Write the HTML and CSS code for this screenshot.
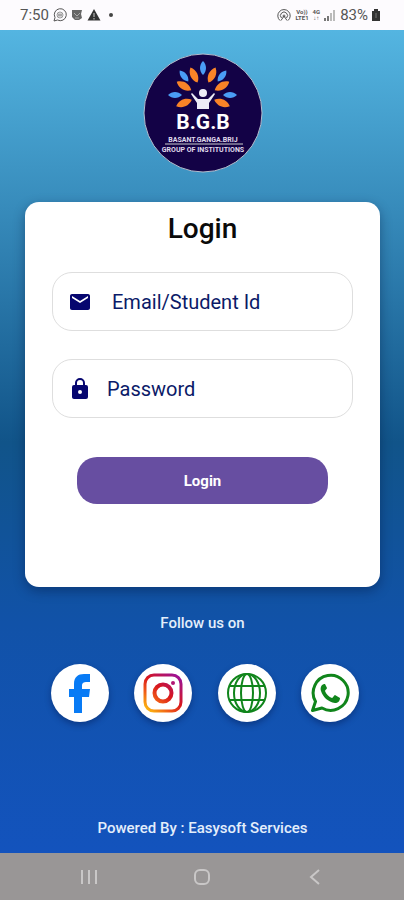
FILE: index.html
```html
<!DOCTYPE html>
<html lang="en">

<head>
    <meta charset="UTF-8">
    <meta name="viewport" content="width=device-width, initial-scale=1.0">
    <title>Login</title>
    <link rel="stylesheet" href="styles.css">
</head>

<body>
    <!-- STATUS BAR -->
    <header class="statusBar">
        <div class="statusLeft">
            <span class="time">7:50</span>
            <svg width="14" height="14" viewBox="0 0 14 14" fill="none" stroke="#555">
                <path d="M1 13l1-3.500A6 6 0 1 1 4.500 12z" />
                <circle cx="7" cy="7" r="3" stroke="#999" />
                <path d="M6 5.500v3M8 5.500v3" />
            </svg>
            <svg width="12" height="12" viewBox="0 0 12 12">
                <path d="M1 1h10l-1 4 1 4-3 2H4L1 8z" fill="#666" />
                <path d="M3 4l3 3 3-3M4 9h4" stroke="#aaa" fill="none" />
            </svg>
            <svg width="14" height="12" viewBox="0 0 14 12">
                <path d="M7 0l6.500 11.500H.5z" fill="#333" />
                <path d="M7 4v4M7 9v1.500" stroke="#ccc" />
            </svg>
            <span class="dot"></span>
        </div>
        <div class="statusRight">
            <svg width="14" height="12" viewBox="0 0 14 12" fill="none" stroke="#555">
                <path d="M3 11.500a6.200 6.200 0 1 1 8 0M4.500 9a3.500 3.500 0 1 1 5 0" />
                <circle cx="7" cy="7" r="1" />
                <path d="M7 7l-3 4.500M7 7l3 4.500" />
            </svg>
            <span class="network">Vo))<br>LTE1</span>
            <span class="network">4G<br>↓↑</span>
            <svg width="12" height="12" viewBox="0 0 12 12">
                <path d="M0 9h2v3H0zM3 7h2v5H3z" fill="#777" />
                <path d="M6 4h2v8H6zM9 1h2v11H9z" fill="#bbb" />
            </svg>
            <span class="battery">83%</span>
            <svg width="8" height="12" viewBox="0 0 8 12">
                <path d="M2 0h4v2h2v10H0V2h2z" fill="#333" />
                <path d="M4 4v5" stroke="#777" />
            </svg>
        </div>
    </header>

    <main class="mainContent">
        <svg class="logo" viewBox="0 0 120 120" role="img" aria-label="B.G.B">
            <defs>
                <path id="leaf" d="M0 -7C4 -3 4 3 0 7C-4 3 -4 -3 0 -7z" />
            </defs>
            <circle cx="60" cy="60" r="59" fill="#130246" stroke="#b5bfce" />
            <g fill="#4a9df5">
                <use href="#leaf" transform="translate(60 15)" />
                <use href="#leaf" transform="translate(41 23) rotate(-38)" />
                <use href="#leaf" transform="translate(79 23) rotate(38)" />
                <use href="#leaf" transform="translate(32 42) rotate(-90)" />
                <use href="#leaf" transform="translate(87 42) rotate(90)" />
            </g>
            <g fill="#f98427">
                <use href="#leaf" transform="translate(51 22) rotate(-25) scale(1.200)" />
                <use href="#leaf" transform="translate(69 22) rotate(25) scale(1.200)" />
                <use href="#leaf" transform="translate(41 33) rotate(-60) scale(1.200)" />
                <use href="#leaf" transform="translate(79 33) rotate(60) scale(1.200)" />
                <use href="#leaf" transform="translate(41 50) rotate(-112) scale(1.200)" />
                <use href="#leaf" transform="translate(79 50) rotate(112) scale(1.200)" />
            </g>
            <g fill="#ececf6">
                <circle cx="60" cy="40" r="4" />
                <path d="M49 40l6 6h10l6-6 1 1-6 9v6H54v-6l-6-9z" />
            </g>
            <text x="60" y="76" class="logoName">B.G.B</text>
            <text x="60" y="89" class="logoText">BASANT.GANGA.BRIJ</text>
            <path d="M22 91h78" stroke="#ccc" />
            <text x="60" y="99" class="logoText">GROUP OF INSTITUTIONS</text>
        </svg>

        <form class="card">
            <h1>Login</h1>
            <div class="field">
                <label for="email">
                    <svg width="24" height="24" viewBox="0 0 24 24" fill="#06066f" role="img" aria-label="Email">
                        <path d="M20 4H4c-1.100 0-2 .9-2 2v12c0 1.100.9 2 2 2h16c1.100 0 2-.9 2-2V6c0-1.100-.9-2-2-2zm0 4l-8 5-8-5V6l8 5 8-5v2z" />
                    </svg>
                </label>
                <input type="text" id="email" placeholder="Email/Student Id">
            </div>
            <div class="field password">
                <label for="password">
                    <svg width="24" height="24" viewBox="0 0 24 24" fill="#06066f" role="img" aria-label="Password">
                        <path d="M18 8h-1V6A5 5 0 0 0 7 6v2H6a2 2 0 0 0-2 2v10c0 1.100.9 2 2 2h12a2 2 0 0 0 2-2V10a2 2 0 0 0-2-2zm-6 9a2 2 0 1 1 0-4 2 2 0 0 1 0 4zm3-9H9V6a3 3 0 0 1 6 0v2z" />
                    </svg>
                </label>
                <input type="password" id="password" placeholder="Password">
            </div>
            <button type="button" class="loginButton">Login</button>
        </form>

        <p class="follow">Follow us on</p>
        <div class="social">
            <a href="#" aria-label="Facebook">
                <svg width="40" height="42" viewBox="0 0 40 42">
                    <path d="M14 41V25H9v-8h5v-5c0-7 4-10 10-10h6v8h-4c-2 0-4 1-4 3v4h8l-1 8h-7v16z" fill="#087bf5" />
                </svg>
            </a>
            <a href="#" aria-label="Instagram">
                <svg width="40" height="40" viewBox="0 0 40 40" fill="none" stroke="url(#insta)" stroke-width="3">
                    <defs>
                        <linearGradient id="insta" gradientUnits="userSpaceOnUse" x1="4" y1="38" x2="34" y2="2">
                            <stop offset="0" stop-color="#fdbd10" />
                            <stop offset=".3" stop-color="#f05a18" />
                            <stop offset=".55" stop-color="#d8161c" />
                            <stop offset="1" stop-color="#9c1296" />
                        </linearGradient>
                    </defs>
                    <rect x="2" y="2" width="36" height="36" rx="9" />
                    <circle cx="20" cy="20" r="8.500" stroke-width="4" />
                    <circle cx="30" cy="10" r="2" fill="#b01672" stroke="none" />
                </svg>
            </a>
            <a href="#" aria-label="Website">
                <svg width="42" height="42" viewBox="0 0 42 42" fill="none" stroke="#10851b" stroke-width="2">
                    <circle cx="21" cy="21" r="19" />
                    <ellipse cx="21" cy="21" rx="13" ry="19" />
                    <ellipse cx="21" cy="21" rx="6" ry="19" />
                    <path d="M4 14h34M4 28h34" />
                </svg>
            </a>
            <a href="#" aria-label="WhatsApp">
                <svg width="40" height="40" viewBox="0 0 40 40">
                    <path d="M2.500 37.500l3-9A17.500 17.500 0 1 1 12 35z" fill="none" stroke="#10851b" stroke-width="3" stroke-linejoin="round" />
                    <path d="M14 11c-3 1-4 4-3 7 2 6 7 11 14 12 3 0 5-2 5-5l-5-3c-1 0-2 3-3 3-3-1-6-4-7-7 0-1 2-2 2-3l-2-4z" fill="#10851b" />
                </svg>
            </a>
        </div>
        <p class="powered">Powered By : Easysoft Services</p>
    </main>

    <!-- ANDROID NAVIGATION -->
    <nav class="navBar">
        <button type="button" aria-label="Recent apps">
            <svg width="18" height="18" viewBox="0 0 18 18"><path d="M2 2v14M9 2v14M16 2v14" /></svg>
        </button>
        <button type="button" aria-label="Home">
            <svg width="18" height="18" viewBox="0 0 18 18"><rect x="2" y="2" width="14" height="14" rx="5" /></svg>
        </button>
        <button type="button" aria-label="Back">
            <svg width="18" height="18" viewBox="0 0 18 18"><path d="M13 2L5 9l8 7" /></svg>
        </button>
    </nav>
</body>

</html>
```
FILE: styles.css
```css
* {
    box-sizing: border-box;
}

body {
    margin: 0px;
    min-height: 100vh;
    display: flex;
    flex-direction: column;
    font-family: Roboto, Arial, sans-serif;
}

.statusBar {
    height: 30px;
    padding: 0px 24px 0px 20px;
    display: flex;
    align-items: center;
    justify-content: space-between;
    background-color: #fdfbfe;
    color: #555;
    font-size: 15px;
}

.statusLeft,
.statusRight {
    display: flex;
    align-items: center;
    gap: 4px;
}

.dot {
    width: 4px;
    height: 4px;
    margin-left: 4px;
    border-radius: 50%;
    background-color: #444;
}

.network {
    font-size: 6px;
    line-height: 6px;
    font-weight: bold;
    text-align: center;
}

.mainContent {
    flex: 1;
    display: flex;
    flex-direction: column;
    align-items: center;
    padding: 23px 24px 15px 25px;
    background: linear-gradient(#54b5e1, #115489 50%, #1152a8 72%, #1353bd);
    color: #e3eefb;
}

.logo {
    width: 120px;
    height: 120px;
}

.logoName {
    fill: #fff;
    font-size: 21px;
    font-weight: bold;
    text-anchor: middle;
}

.logoText {
    fill: #e0dced;
    font-size: 7px;
    font-weight: bold;
    text-anchor: middle;
}

.card {
    width: 100%;
    min-height: 385px;
    margin-top: 29px;
    padding: 11px 27px;
    border-radius: 14px;
    background-color: #fff;
    box-shadow: 0px 4px 12px rgba(0, 20, 60, 0.4);

    h1 {
        margin: 0px 0px 27px;
        color: #0a0a0a;
        font-size: 28px;
        line-height: 32px;
        font-weight: 500;
        text-align: center;
    }
}

.field {
    height: 59px;
    margin-bottom: 28px;
    padding: 0px 15px;
    display: flex;
    align-items: center;
    gap: 20px;
    border: 1px solid #dedede;
    border-radius: 20px;

    label {
        display: flex;
    }

    input {
        flex: 1;
        min-width: 0px;
        padding: 0px;
        border: none;
        outline: none;
        background: none;
        color: #0b1a68;
        font-family: inherit;
        font-size: 20px;
    }

    input::placeholder {
        color: #0b1a68;
        opacity: 1;
    }
}

.password {
    gap: 15px;
}

.loginButton {
    display: block;
    width: calc(100% - 50px);
    height: 47px;
    margin: 39px auto 0px;
    border: none;
    border-radius: 20px;
    background-color: #674ea1;
    color: #fff;
    font-family: inherit;
    font-size: 15px;
    font-weight: bold;
}

.follow {
    margin: 26px 0px 31px;
    font-size: 15px;
    line-height: 20px;
    font-weight: 500;
}

.social {
    width: 100%;
    padding: 0px 21px 0px 26px;
    display: flex;
    justify-content: space-between;

    a {
        width: 58px;
        height: 58px;
        display: flex;
        align-items: center;
        justify-content: center;
        border-radius: 50%;
        background-color: #fff;
        box-shadow: 0px 3px 6px rgba(0, 20, 70, 0.4);
    }
}

.powered {
    margin: auto 0px 0px;
    font-size: 15px;
    line-height: 20px;
    font-weight: 500;
}

.navBar {
    height: 47px;
    padding: 0px 32px;
    display: flex;
    align-items: center;
    background-color: #999696;

    button {
        flex: 1;
        padding: 0px;
        border: none;
        background: none;
    }

    svg {
        display: block;
        margin: 0px auto;
        fill: none;
        stroke: #c9c7c7;
        stroke-width: 2;
    }
}
```
